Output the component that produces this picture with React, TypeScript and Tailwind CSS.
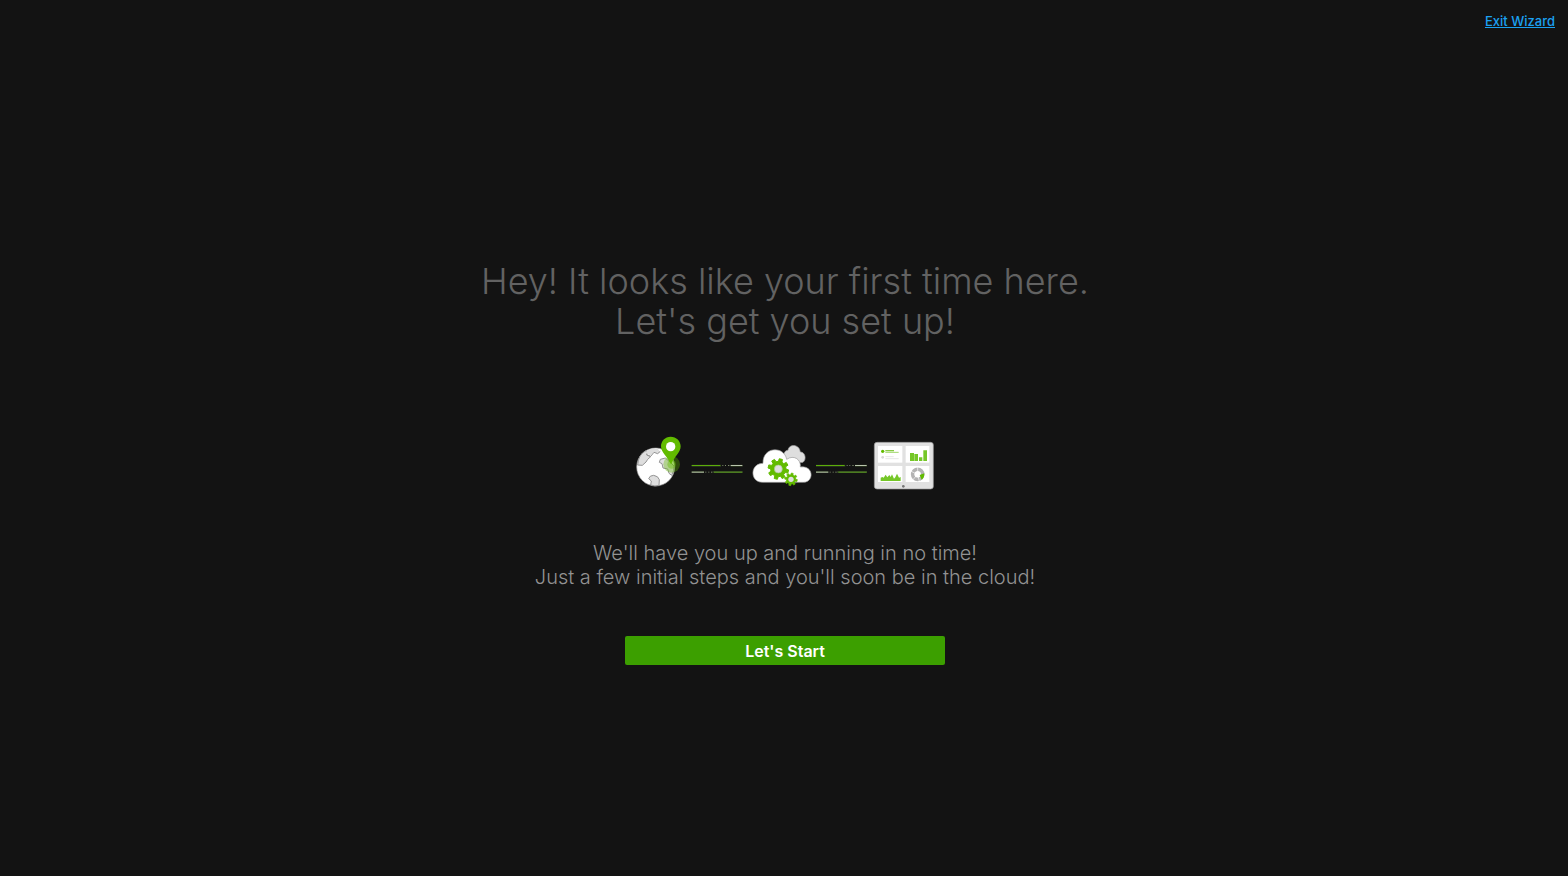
const GREEN = '#62bb00';

// Cog outline with rounded-off teeth, centred on cx/cy.
const gearPath = (cx: number, cy: number, outer: number, inner: number, teeth = 8, turn = 0) => {
  const step = (Math.PI * 2) / teeth;
  const points: string[] = [];
  for (let i = 0; i < teeth; i++) {
    const a = i * step + turn;
    const corners = [
      [inner, -0.3],
      [outer, -0.2],
      [outer, 0.2],
      [inner, 0.3],
    ];
    corners.forEach(([r, f]) => {
      const x = cx + r * Math.cos(a + f * step);
      const y = cy + r * Math.sin(a + f * step);
      points.push(`${x.toFixed(1)} ${y.toFixed(1)}`);
    });
  }
  return `M${points.join('L')}Z`;
};

const Globe = () => (
  <g>
    <circle cx="77" cy="111" r="57" fill="#fff" stroke="#8f8f8f" strokeWidth="2" />
    <g fill="#dedede" stroke="#949494" strokeWidth="3" strokeLinejoin="round">
      <path d="M23 105 Q25 73 48 62 L53 66 L50 75 L62 80 L53 88 L48 96 L37 106 Z" />
      <path d="M49 62 Q66 54 82 55 L91 66 L83 71 L72 67 L62 76 L52 72 Z" stroke="none" />
      <path d="M50 74 L62 79 L72 67 L83 71 L91 64" fill="none" />
      <path d="M91 88 L106 84 L120 96 L132 108 Q133 122 125 136 L117 130 L113 117 L99 114 L96 101 L88 97 Z" />
      <path d="M62 165 L64 153 L56 146 Q59 136 71 136 Q85 138 88 149 L87 166 Q75 170 62 165 Z" />
    </g>
    <circle cx="125" cy="103" r="25" fill={GREEN} opacity="0.35" />
    <circle cx="125" cy="103" r="13" fill={GREEN} opacity="0.4" />
    <path d="M122 20 C105 20 93 33 93 49 C93 67 111 79 123 103 C134 79 152 67 152 49 C152 33 139 20 122 20 Z" fill={GREEN} />
    <circle cx="122" cy="50" r="14" fill="#fff" />
  </g>
);

const Link = () => (
  <g strokeWidth="3">
    <g stroke="#2c3a20" strokeWidth="6">
      <path d="M17 32H105M134 32H170" />
      <path d="M17 51H54M80 51H170" />
    </g>
    <path d="M17 31.5H103" stroke="#5cad0a" />
    <path d="M109 31.5h3M117 31.5h3M126 31.5h4" stroke="#7d8c6c" />
    <path d="M134 31.5H169" stroke="#bac5ae" />
    <path d="M17 51.5H54" stroke="#bac5ae" />
    <path d="M58 51.5h3M67 51.5h3M75 51.5h4" stroke="#7d8c6c" />
    <path d="M84 51.5H169" stroke="#5c9f20" />
  </g>
);

const Cloud = () => (
  <g>
    <path
      d="M108 58 C105 45 112 37 120 37 C122 17 154 17 157 42 C171 41 177 64 165 73 L120 78 Z"
      fill="#dedede"
      stroke="#9c9c9c"
      strokeWidth="2"
    />
    <path
      d="M43 133 C5 133 5 76 45 76 C43 25 109 23 116 64 C138 49 160 65 157 87 C198 81 199 133 166 133 Z"
      fill="#fff"
      stroke="#9c9c9c"
      strokeWidth="2"
    />
    <path d={gearPath(91, 93, 31, 23, 8, 0.25)} fill={GREEN} stroke={GREEN} strokeWidth="3" strokeLinejoin="round" />
    <circle cx="91" cy="93" r="12" fill="#dedede" stroke="#a6c788" strokeWidth="2" />
    <path d={gearPath(129, 124, 19, 14, 8, 0.2)} fill={GREEN} stroke={GREEN} strokeWidth="2" strokeLinejoin="round" />
    <circle cx="129" cy="124" r="8" fill="#dedede" />
  </g>
);

const Dashboard = () => (
  <g>
    <rect x="13" y="13" width="177" height="140" rx="8" fill="#e1e1e1" stroke="#999" strokeWidth="2" />
    <g fill="#fff">
      <rect x="24" y="24" width="73" height="50" />
      <rect x="107" y="24" width="71" height="50" />
      <rect x="24" y="84" width="73" height="48" />
      <rect x="107" y="84" width="71" height="48" />
    </g>
    <circle cx="38" cy="40" r="5" fill={GREEN} />
    <path d="M46 38H72" stroke="#88cc43" strokeWidth="4" />
    <path d="M46 43H86" stroke="#a0d76a" strokeWidth="3" />
    <circle cx="38" cy="58" r="4" fill="#d6d6d6" />
    <path d="M46 56H71M46 62H86" stroke="#e6e6e6" strokeWidth="3" />
    <path d="M120 45h12v24h-12zM133 48h11v21h-11zM147 58h10v11h-10zM160 37h11v32h-11z" fill="#75c728" />
    <path d="M32 129V119L37 117L41 119L47 110L52 118L58 111L62 117L66 109L72 122L76 118L81 107L87 119L92 117V129Z" fill="#75c728" />
    <circle cx="143" cy="109" r="15" fill="none" stroke="#b3b3b3" strokeWidth="11" />
    <path d="M143 109V87M143 109L123 100M143 109L128 126M143 109L148 130" stroke="#fff" strokeWidth="2" />
    <circle cx="143" cy="109" r="9" fill="#fff" />
    <path d="M149 111L163 106Q164 119 155 125Z" fill={GREEN} />
    <circle cx="100" cy="145" r="4" fill="#777" />
  </g>
);

const SetupIllustration = () => (
  <svg viewBox="0 0 894 162" className="w-[298px]" fill="none" aria-hidden="true">
    <g transform="translate(-18 -18)">
      <Globe />
    </g>
    <g transform="translate(150 57)">
      <Link />
    </g>
    <g transform="translate(336 6)">
      <Cloud />
    </g>
    <g transform="translate(523 57)">
      <Link />
    </g>
    <g transform="translate(702 6)">
      <Dashboard />
    </g>
  </svg>
);

const App = () => {
  return (
    <div className="min-h-screen bg-[#131313] font-['Inter','Liberation_Sans',sans-serif]">
      <header className="flex justify-end px-[13px] pt-[11px]">
        <a href="#exit" className="text-[13px] leading-5 font-medium text-[#1ba1f2] underline">
          Exit Wizard
        </a>
      </header>

      <main className="flex flex-col items-center pt-[230px] pr-4 pb-10 pl-[18px] text-center">
        <h1 className="text-4xl leading-10 font-light text-[#626262]">
          Hey! It looks like your first time here.
          <br />
          Let's get you set up!
        </h1>

        <div className="mt-[95px]">
          <SetupIllustration />
        </div>

        <p className="mt-[51px] text-xl leading-6 font-light text-[#929292]">
          We'll have you up and running in no time!
          <br />
          Just a few initial steps and you'll soon be in the cloud!
        </p>

        <button
          type="button"
          className="mt-[47px] h-[29px] w-full max-w-80 rounded-xs bg-[#3c9f00] text-base font-semibold text-white"
        >
          Let's Start
        </button>
      </main>
    </div>
  );
};

export default App;
